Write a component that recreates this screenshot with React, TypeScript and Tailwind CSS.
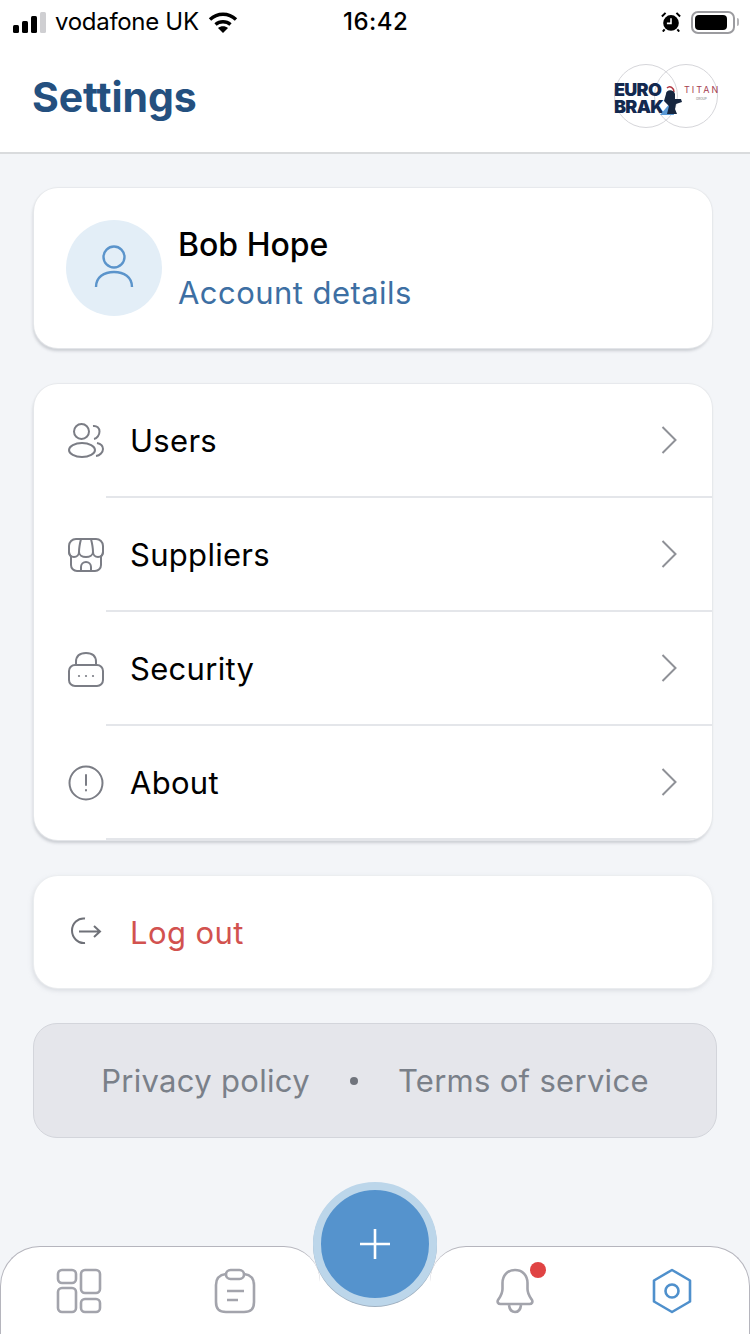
import React from 'react';

function StatusBar() {
  return (
    <div className="flex h-[44px] items-center justify-between pl-[13px] pr-[11px] text-black">
      <div className="flex items-center">
        <svg width="33" height="21" viewBox="0 0 33 21" className="fill-current">
          <rect x="0" y="13" width="6" height="8" rx="1.500" />
          <rect x="9" y="9" width="6" height="12" rx="1.500" />
          <rect x="18" y="4" width="6" height="17" rx="1.500" />
          <rect x="27" y="0" width="6" height="21" rx="1.500" className="fill-[#cfcfd2]" />
        </svg>
        <span className="ml-[9px] text-[24px] leading-none tracking-[-0.3px]">vodafone UK</span>
        <svg width="30" height="22" viewBox="0 0 30 22" className="ml-[9px] fill-none stroke-current" strokeWidth="3.4">
          <path d="M2 8.500C9.500 1.500 20.500 1.500 28 8.500" />
          <path d="M7.500 13.500C11.800 9.800 18.200 9.800 22.500 13.500" />
          <path d="M15 22l-5-5c2.800-2.300 7.200-2.300 10 0z" className="fill-current stroke-none" />
        </svg>
      </div>
      <span className="absolute left-[343px] text-[24px] font-medium leading-none tracking-[0.5px]">16:42</span>
      <div className="flex items-center">
        <svg width="20" height="20" viewBox="0 0 22 22" className="mr-[10px]">
          <circle cx="11" cy="12" r="8.600" fill="#000" />
          <path d="M11 7v5.500H6.500" stroke="#fff" strokeWidth="1.700" fill="none" />
          <path d="M1 5l4-4M21 5l-4-4M4 19l-2 2.500M18 19l2 2.500" stroke="#000" strokeWidth="2.200" />
        </svg>
        <div className="flex h-[23px] w-[44px] items-center rounded-[7px] border-2 border-[#9b9b9f] p-[2px]">
          <div className="h-full w-[32px] rounded-[4px] bg-black" />
        </div>
        <div className="ml-[2px] h-[8px] w-[2px] rounded-r bg-[#b5b5b8]" />
      </div>
    </div>
  );
}

function Logo() {
  return (
    <div className="relative h-[64px] w-[104px]">
      <div className="absolute left-0 top-0 h-[64px] w-[64px] rounded-full border border-[#d6d6da]" />
      <div className="absolute left-[40px] top-0 h-[64px] w-[64px] rounded-full border border-[#d6d6da]" />
      <div className="absolute left-0 top-[17px] text-[18px] font-black leading-[17px] tracking-[-0.7px] text-[#13294f]">EURO</div>
      <div className="absolute left-0 top-[34px] text-[18px] font-black leading-[17px] tracking-[-0.7px] text-[#13294f]">BRAK</div>
      <svg width="26" height="32" viewBox="0 0 26 32" className="absolute left-[44px] top-[20px]">
        <path d="M2 31L13 18l3 13z" fill="#5a9ad6" />
        <path d="M9 4c3-3 7 0 7 4" stroke="#b0343f" strokeWidth="1.500" fill="none" />
        <path d="M8 10c0-5 8-5 9 0v5h6l1 3-6 2-1 5 2 5H9l2-8-5-5z" fill="#16263f" />
      </svg>
      <div className="absolute left-[70px] top-[21px] whitespace-nowrap text-[9px] leading-[10px] tracking-[2px] text-[#a5404f]">TITAN</div>
      <div className="absolute left-[82px] top-[33px] text-[3px] leading-[4px] text-[#777]">GROUP</div>
    </div>
  );
}

function UsersIcon() {
  return (
    <svg width="36" height="36" viewBox="0 0 36 36" fill="none" stroke="#7b7d85" strokeWidth="2">
      <circle cx="13.500" cy="8.500" r="7.500" />
      <ellipse cx="14" cy="27" rx="13" ry="7" />
      <path d="M25 3c4-.5 6.500 2 6.500 5.500S29 15.500 26 16" />
      <path d="M29 20c3.500.700 6 3 6 6s-3 6.500-7 7" />
    </svg>
  );
}

function StoreIcon() {
  return (
    <svg width="36" height="36" viewBox="0 0 36 36" fill="none" stroke="#7b7d85" strokeWidth="2">
      <path d="M8 2h20a7 7 0 0 1 7 7v6c0 2-1 3.500-2 4.500V28a6 6 0 0 1-6 6H9a6 6 0 0 1-6-6v-8.500C2 18.500 1 17 1 15V9a7 7 0 0 1 7-7z" />
      <path d="M1 15c0 3 2.200 5 5 5s5-2 5-5c0-4 1-9 2-13" />
      <path d="M11 15c0 3 3.200 5 7 5s7-2 7-5c0-4-1-9-2-13" />
      <path d="M25 15c0 3 2.200 5 5 5s5-2 5-5" />
      <path d="M13 34v-4a5 5 0 0 1 10 0v4" />
    </svg>
  );
}

function LockIcon() {
  return (
    <svg width="36" height="36" viewBox="0 0 36 36" fill="none" stroke="#7b7d85" strokeWidth="2">
      <path d="M8 14V11C8 5 12 2 18 2s10 3 10 9v3" />
      <rect x="1" y="14" width="34" height="21" rx="6" />
      <circle cx="11" cy="25" r="1.100" fill="#7b7d85" stroke="none" />
      <circle cx="18" cy="25" r="1.100" fill="#7b7d85" stroke="none" />
      <circle cx="25" cy="25" r="1.100" fill="#7b7d85" stroke="none" />
    </svg>
  );
}

function InfoIcon() {
  return (
    <svg width="36" height="36" viewBox="0 0 36 36" fill="none" stroke="#7b7d85" strokeWidth="2">
      <circle cx="18" cy="18" r="16.500" />
      <path d="M18 10v10M18 25v.5" strokeLinecap="round" />
    </svg>
  );
}

function Chevron() {
  return (
    <svg width="16" height="30" viewBox="0 0 16 30" fill="none" stroke="#8f9197" strokeWidth="2">
      <path d="M1.500 2l13 13-13 13" />
    </svg>
  );
}

function MenuRow({ icon, label }: { icon: React.ReactNode; label: string }) {
  return (
    <div className="flex h-[114px] items-stretch">
      <div className="flex w-[72px] shrink-0 items-center pl-[34px]">{icon}</div>
      <div className="flex flex-1 items-center justify-between border-b-2 border-[#e4e6ea] pr-[35px]">
        <span className="pl-[24px] text-[31px] leading-none tracking-[0.3px] text-black">{label}</span>
        <Chevron />
      </div>
    </div>
  );
}

export default function App() {
  return (
    <div className="relative flex h-[1334px] w-[750px] flex-col overflow-hidden bg-[#f3f5f8] font-['Inter',sans-serif]">
      <header className="h-[154px] shrink-0 border-b-2 border-[#d9dbdd] bg-white">
        <StatusBar />
        <div className="flex h-[108px] items-center justify-between pl-[32px] pr-[32px]">
          <h1 className="pb-[2px] text-[41px] font-bold leading-none tracking-[-0.1px] text-[#24507f]">Settings</h1>
          <div className="mt-[-4px]">
            <Logo />
          </div>
        </div>
      </header>

      <main className="flex flex-col pl-[34px] pr-[38px] pt-[34px]">
        <section className="flex h-[160px] items-center rounded-[24px] bg-white pl-[32px] shadow-[0_0_1px_1px_#e6e8eb,-1px_3px_3px_rgba(150,155,165,0.45)]">
          <div className="flex h-[96px] w-[96px] items-center justify-center rounded-full bg-[#e3eef7]">
            <svg width="40" height="46" viewBox="0 0 40 46" fill="none" stroke="#5b94cb" strokeWidth="2.400">
              <circle cx="20" cy="12" r="10.500" />
              <path d="M2 42c0-10 8-15 18-15s18 5 18 15" />
            </svg>
          </div>
          <div className="ml-[16px] pt-[2px]">
            <div className="text-[32px] font-medium leading-[38px] text-black">Bob Hope</div>
            <div className="mt-[10px] text-[31px] leading-[38px] tracking-[0.45px] text-[#3d6fa3]">Account details</div>
          </div>
        </section>

        <section className="mt-[36px] overflow-hidden rounded-[24px] bg-white shadow-[0_0_1px_1px_#e6e8eb,-1px_3px_3px_rgba(150,155,165,0.45)]">
          <MenuRow icon={<UsersIcon />} label="Users" />
          <MenuRow icon={<StoreIcon />} label="Suppliers" />
          <MenuRow icon={<LockIcon />} label="Security" />
          <MenuRow icon={<InfoIcon />} label="About" />
        </section>

        <section className="mt-[36px] flex h-[112px] items-center rounded-[24px] bg-white pl-[36px] shadow-[0_0_1px_1px_#eceef0,-1px_2px_5px_rgba(150,155,165,0.35)]">
          <svg width="32" height="32" viewBox="0 0 32 32" fill="none" stroke="#6f7178" strokeWidth="2">
            <path d="M15 2.500C8 1.500 2 7.500 2 14.500s6 13.500 13 12.500" />
            <path d="M9 15.500h21M24 10l6 5.500-6 5.500" />
          </svg>
          <span className="ml-[28px] text-[31px] leading-none tracking-[0.4px] text-[#d2524f]">Log out</span>
        </section>

        <section className="-ml-[1px] -mr-[5px] mt-[35px] flex h-[115px] items-center justify-center rounded-[24px] border border-[#d3d5db] bg-[#e5e6eb] text-[31px] leading-none tracking-[0.3px] text-[#7a8089]">
          <span>Privacy policy</span>
          <span className="mx-[40px] h-[8px] w-[8px] rounded-full bg-[#70747c]" />
          <span>Terms of service</span>
        </section>
      </main>

      <nav className="mt-auto flex h-[88px] shrink-0 justify-between">
        <div className="flex w-[320px] rounded-tl-[40px] rounded-tr-[36px] border-l border-t border-[#b5b5bd] bg-white">
          <div className="flex w-[155px] justify-center pt-[21px]">
            <svg width="46" height="46" viewBox="0 0 46 46" fill="none" stroke="#a3a4ac" strokeWidth="2.600">
              <rect x="2" y="2" width="18" height="13" rx="4" />
              <rect x="25" y="2" width="19" height="23" rx="4" />
              <rect x="2" y="20" width="18" height="24" rx="4" />
              <rect x="25" y="31" width="19" height="13" rx="4" />
            </svg>
          </div>
          <div className="flex w-[158px] justify-center pt-[21px]">
            <svg width="42" height="46" viewBox="0 0 42 46" fill="none" stroke="#a3a4ac" strokeWidth="2.600">
              <path d="M12 6C5 7 2 10 2 17v17c0 7 3 10 10 10h18c7 0 10-3 10-10V17c0-7-3-10-10-11" />
              <rect x="12" y="2" width="18" height="9" rx="4.500" />
              <path d="M13 23h17M13 32h11" />
            </svg>
          </div>
        </div>
        <div className="relative flex w-[320px] rounded-tl-[36px] rounded-tr-[40px] border-r border-t border-[#b5b5bd] bg-white pl-[66px] pt-[21px]">
          <svg width="38" height="46" viewBox="0 0 38 46" fill="none" stroke="#a3a4ac" strokeWidth="2.600">
            <path d="M19 2c-8 0-12.500 6-12.500 13v6c0 5-2.500 8-4.500 11-1 2 0 4 2.500 4h29c2.500 0 3.500-2 2.500-4-2-3-4.500-6-4.500-11v-6C31.500 8 27 2 19 2z" />
            <path d="M13 37c.5 5 3 7 6 7s5.500-2 6-7" />
          </svg>
          <span className="absolute left-[100px] top-[15px] h-[16px] w-[16px] rounded-full bg-[#e04343]" />
          <svg width="42" height="46" viewBox="0 0 42 46" fill="none" stroke="#4f90cc" strokeWidth="2.600" className="ml-[117px]">
            <path d="M21 2l18 10.500v21L21 44 3 33.500v-21z" strokeLinejoin="round" />
            <circle cx="21" cy="23" r="6.500" />
          </svg>
        </div>
      </nav>

      <div className="absolute bottom-0 left-[320px] h-[64px] w-[110px] bg-white" />
      <button className="absolute left-[313px] top-[1182px] flex h-[124px] w-[124px] items-center justify-center rounded-full border-[8px] border-[#bcd6ea] bg-[#5593cd] shadow-[0_1px_0_#9fb0c0]">
        <svg width="32" height="32" viewBox="0 0 32 32" stroke="#fff" strokeWidth="2.600">
          <path d="M16 1v30M1 16h30" />
        </svg>
      </button>
    </div>
  );
}
